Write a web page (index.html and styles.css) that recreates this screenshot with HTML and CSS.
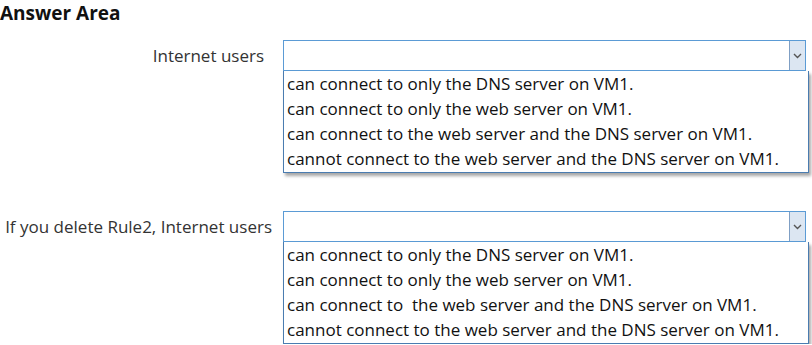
FILE: index.html
```html
<!DOCTYPE html>
<html lang="en">
<head>
    <meta charset="UTF-8">
    <title>Answer Area</title>
    <link rel="stylesheet" href="styles.css">
</head>
<body>
    <h1 class="title">Answer Area</h1>

    <div class="question first">
        <div class="label">Internet users</div>
        <div class="dropdown">
            <div class="select"><span class="arrow"><svg width="9" height="6" viewBox="0 0 9 6"><path d="M1 1 L4.5 4.5 L8 1" fill="none" stroke="#555" stroke-width="1.4"/></svg></span></div>
            <ul class="options">
                <li>can connect to only the DNS server on VM1.</li>
                <li>can connect to only the web server on VM1.</li>
                <li>can connect to the web server and the DNS server on VM1.</li>
                <li>cannot connect to the web server and the DNS server on VM1.</li>
            </ul>
        </div>
    </div>

    <div class="question second">
        <div class="label">If you delete Rule2, Internet users</div>
        <div class="dropdown">
            <div class="select"><span class="arrow"><svg width="9" height="6" viewBox="0 0 9 6"><path d="M1 1 L4.5 4.5 L8 1" fill="none" stroke="#555" stroke-width="1.4"/></svg></span></div>
            <ul class="options">
                <li>can connect to only the DNS server on VM1.</li>
                <li>can connect to only the web server on VM1.</li>
                <li>can connect to&nbsp; the web server and the DNS server on VM1.</li>
                <li>cannot connect to the web server and the DNS server on VM1.</li>
            </ul>
        </div>
    </div>
</body>
</html>
```

FILE: styles.css
```css
body {
    margin: 0;
    background: #fff;
    font-family: 'Open Sans', 'Liberation Sans', sans-serif;
    color: #1a1a1a;
}
.title {
    font-size: 19px;
    font-weight: bold;
    margin: 0;
    padding: 0;
    line-height: 26px;
    color: #111;
}
.question {
    display: grid;
    grid-template-columns: 283px 526px;
}
.first {
    margin-top: 14px;
}
.second {
    margin-top: 38px;
}
.label {
    text-align: right;
    padding-right: 19px;
    font-size: 17px;
    line-height: 32px;
    color: #333;
    white-space: nowrap;
}
.second .label {
    padding-right: 11px;
}
.select {
    height: 31px;
    width: 523px;
    box-sizing: border-box;
    border: 1px solid #5b9bd5;
    display: flex;
    justify-content: flex-end;
}
.arrow {
    width: 15px;
    background: #dce6f2;
    border-left: 1px solid #7f9fc4;
    display: flex;
    align-items: center;
    justify-content: center;
}
.options {
    list-style: none;
    margin: 0;
    padding: 0 0 1px 3px;
    border: 1px solid #4a7cb0;
    border-top: none;
    box-shadow: 2px 3px 3px rgba(0, 0, 0, 0.35);
    font-size: 17px;
    line-height: 25px;
    color: #111;
    white-space: nowrap;
}
```
